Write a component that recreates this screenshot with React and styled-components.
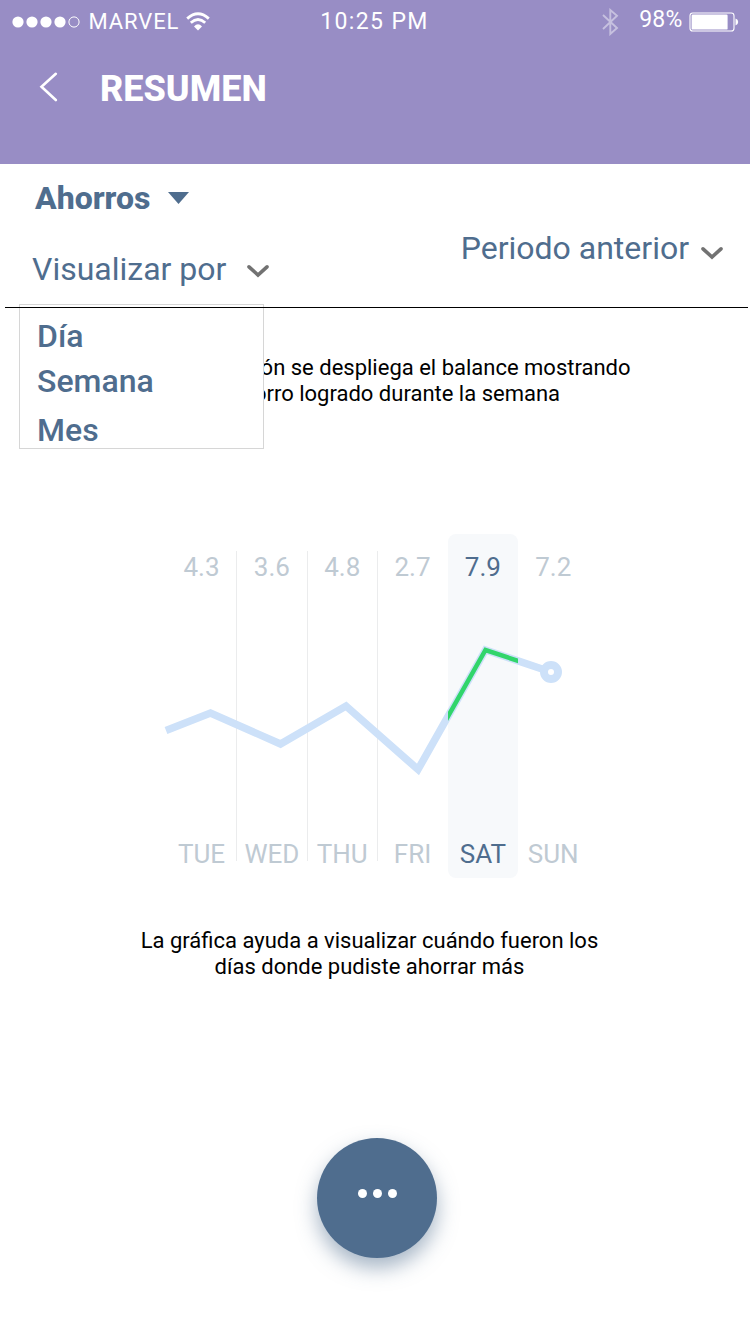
import React from 'react';
import styled, { createGlobalStyle } from 'styled-components';

const slate = '#4f6d8e';
const lilac = '#988dc5';

const GlobalStyle = createGlobalStyle`
  * { box-sizing: border-box; }
  body { margin: 0; background: #fff; font-family: Roboto, sans-serif; }
  p, h1, h2, ul { margin: 0; padding: 0; font-weight: 400; }
  svg { display: block; flex: none; }
  button { border: 0; padding: 0; background: none; font: inherit; color: inherit; }
`;

const Screen = styled.main`
  width: 750px;
  height: 1334px;
  display: flex;
  flex-direction: column;
  overflow: hidden;
  background: #fff;
`;

const Header = styled.header`
  height: 164px;
  flex: none;
  background: ${lilac};
  color: #fff;
`;

const StatusBar = styled.div`
  height: 43px;
  display: grid;
  grid-template-columns: 1fr auto 1fr;
  align-items: center;
  padding: 0 11.5px 0 11.5px;
  font-size: 22px;
  line-height: 26px;
`;

const Carrier = styled.div`
  display: flex;
  align-items: center;
  letter-spacing: 0.9px;
`;

const CarrierName = styled.span`
  margin: 1px 7px 0 8px;
`;

const Clock = styled.span`
  margin: 1px 1px 0 0;
  font-size: 23px;
  letter-spacing: 1.35px;
`;

const Power = styled.div`
  display: flex;
  align-items: center;
  justify-content: flex-end;
`;

const Percent = styled.span`
  margin: 0 6px 3px 20px;
  font-size: 23px;
  letter-spacing: 0.2px;
`;

const TitleRow = styled.div`
  display: flex;
  align-items: center;
  gap: 42px;
  padding: 25px 0 0 39px;
`;

const BackIcon = styled.svg`
  margin-bottom: 4px;
`;

const Title = styled.h1`
  font-size: 36px;
  line-height: 42px;
  font-weight: 800;
`;

const Filters = styled.section`
  position: relative;
  height: 143px;
  flex: none;
  display: flex;
  justify-content: space-between;
  padding: 15px 26px 0 32px;
  color: ${slate};
`;

const FilterColumn = styled.div`
  display: flex;
  flex-direction: column;
  align-items: flex-start;
  gap: 33px;
  padding-top: ${(p) => p.$top || 0}px;
`;

const Picker = styled.button`
  display: flex;
  align-items: center;
  gap: ${(p) => p.$gap}px;
  margin-left: ${(p) => p.$indent || 0}px;
  font-size: 32px;
  line-height: 38px;
  font-weight: ${(p) => (p.$strong ? 800 : 400)};
`;

const Chevron = styled.svg`
  margin-top: ${(p) => p.$drop}px;
`;

const Rule = styled.hr`
  position: relative;
  z-index: 2;
  width: 743px;
  height: 1px;
  flex: none;
  margin: 0 0 0 5px;
  border: 0;
  background: #000;
`;

const Menu = styled.ul`
  position: absolute;
  z-index: 1;
  left: 19px;
  top: 140px;
  width: 245px;
  height: 145px;
  padding: 12px 0 0 17px;
  border: 1px solid #d6d6d6;
  background: #fff;
  list-style: none;
`;

const MenuItem = styled.li`
  margin-bottom: ${(p) => p.$after}px;
  font-size: 32px;
  line-height: 38px;
  font-weight: 500;
`;

const Note = styled.p`
  margin: ${(p) => p.$margin};
  font-size: 22px;
  line-height: 26px;
  text-align: center;
  color: #000;
`;

const Chart = styled.section`
  position: relative;
  width: 422px;
  height: 344px;
  flex: none;
  margin: 127px 0 0 166.4px;
  display: grid;
  grid-template-columns: repeat(6, 1fr);
`;

const Day = styled.div`
  position: relative;
  display: flex;
  flex-direction: column;
  align-items: center;
  justify-content: space-between;
  padding: 18px 0 9px;
  border-radius: 8px;
  background: ${(p) => (p.$active ? '#f7f9fb' : 'transparent')};
  color: ${(p) => (p.$active ? slate : '#bfcad3')};
  font-size: 26px;
  line-height: 30px;

  &::after {
    content: '';
    display: ${(p) => (p.$divider ? 'block' : 'none')};
    position: absolute;
    right: -0.5px;
    top: 17px;
    width: 1px;
    height: 310px;
    background: #ebeced;
  }
`;

const Trend = styled.svg`
  position: absolute;
  left: -4.4px;
  top: 0;
`;

const Fab = styled.button`
  width: 120px;
  height: 120px;
  flex: none;
  display: flex;
  align-items: center;
  justify-content: center;
  gap: 6px;
  margin: 158px 0 0 317px;
  padding-bottom: 9px;
  border-radius: 50%;
  background: ${slate};
  box-shadow: 0 10px 20px rgba(79, 109, 142, 0.5);
`;

const Dot = styled.span`
  width: 9px;
  height: 9px;
  border-radius: 50%;
  background: #fff;
`;

const days = [
  { name: 'TUE', value: '4.3', divider: true },
  { name: 'WED', value: '3.6', divider: true },
  { name: 'THU', value: '4.8', divider: true },
  { name: 'FRI', value: '2.7' },
  { name: 'SAT', value: '7.9', active: true },
  { name: 'SUN', value: '7.2' },
];

const trendPoints = '4,196.5 48.5,179 118.5,210 184,172 256,235.5 323.5,116 389,138';

const Signal = () => (
  <svg width="69" height="12" viewBox="0 0 69 12">
    {[6, 20, 34, 48].map((x) => (
      <circle key={x} cx={x} cy="6" r="5.6" fill="#fff" />
    ))}
    <circle cx="62" cy="6" r="5.1" fill="none" stroke="#fff" />
  </svg>
);

const Wifi = () => (
  <svg width="24" height="20" viewBox="0 0 24 20" fill="none" stroke="#fff">
    <path d="M1.2 6.6 Q12 -3.2 22.8 6.6" strokeWidth="2.8" />
    <path d="M4.8 10.8 Q12 4.2 19.2 10.8" strokeWidth="2.8" />
    <path d="M8 14.4 Q12 10.2 16 14.4 L12 18.6 Z" fill="#fff" stroke="none" />
  </svg>
);

const Bluetooth = () => (
  <svg width="17" height="28" viewBox="0 0 17 28" fill="none" stroke="#fff" strokeWidth="1.9" opacity="0.45">
    <path d="M1 7 L15 20 L8.3 26 V2 L15 7.8 L1 21" />
  </svg>
);

const Battery = () => (
  <svg width="50" height="20" viewBox="0 0 50 20">
    <rect x="1" y="1" width="44" height="18" rx="2.8" fill="none" stroke="#fff" strokeWidth="1.1" />
    <rect x="2.6" y="2.6" width="36" height="15" rx="1.2" fill="#fff" />
    <path d="M46.5 6.5 Q49.2 7.2 49.2 10 Q49.2 12.8 46.5 13.5 Z" fill="#fff" />
  </svg>
);

const ChevronDown = ({ drop }) => (
  <Chevron $drop={drop} width="24" height="15" viewBox="0 0 24 15" fill="none" stroke="#727272" strokeWidth="3.6" strokeLinecap="round">
    <path d="M3 2.8 L12 11 L21 2.8" />
  </Chevron>
);

export default function App() {
  return (
    <>
      <GlobalStyle />
      <Screen>
        <Header>
          <StatusBar>
            <Carrier>
              <Signal />
              <CarrierName>MARVEL</CarrierName>
              <Wifi />
            </Carrier>
            <Clock>10:25 PM</Clock>
            <Power>
              <Bluetooth />
              <Percent>98%</Percent>
              <Battery />
            </Power>
          </StatusBar>
          <TitleRow>
            <BackIcon width="19" height="30" viewBox="0 0 19 30" fill="none" stroke="#fff" strokeWidth="2.6" strokeLinecap="round">
              <path d="M16.8 1.8 L2.5 14.8 L16.8 28" />
            </BackIcon>
            <Title>RESUMEN</Title>
          </TitleRow>
        </Header>

        <Filters>
          <FilterColumn>
            <Picker $strong $gap={18} $indent={3}>
              Ahorros
              <svg width="21" height="12" viewBox="0 0 21 12" fill={slate}>
                <path d="M0 0 H21 L10.5 12 Z" />
              </svg>
            </Picker>
            <Picker $gap={20}>
              Visualizar por
              <ChevronDown drop={5} />
            </Picker>
          </FilterColumn>
          <FilterColumn $top={50}>
            <Picker $gap={11}>
              Periodo anterior
              <ChevronDown drop={10} />
            </Picker>
          </FilterColumn>
          <Menu>
            <MenuItem $after={7}>Día</MenuItem>
            <MenuItem $after={11}>Semana</MenuItem>
            <MenuItem>Mes</MenuItem>
          </Menu>
        </Filters>
        <Rule />

        <Note $margin="47px 0 0 12px">
          En esta sección se despliega el balance mostrando
          <br />
          &nbsp;el ahorro logrado durante la semana
        </Note>

        <Chart>
          {days.map((d) => (
            <Day key={d.name} $active={d.active} $divider={d.divider}>
              <span>{d.value}</span>
              <span>{d.name}</span>
            </Day>
          ))}
          <Trend width="430" height="344" viewBox="0 0 430 344" fill="none">
            <defs>
              <clipPath id="active-day">
                <rect x="286" y="0" width="70" height="344" />
              </clipPath>
            </defs>
            <polyline points={trendPoints} stroke="#cde1f9" strokeWidth="7.5" />
            <polyline points={trendPoints} stroke="#31d56b" strokeWidth="4.5" clipPath="url(#active-day)" />
            <circle cx="389" cy="138" r="7" fill="#fff" stroke="#cde1f9" strokeWidth="8" />
          </Trend>
        </Chart>

        <Note $margin="50px 11px 0 0">
          La gráfica ayuda a visualizar cuándo fueron los
          <br />
          días donde pudiste ahorrar más
        </Note>

        <Fab aria-label="Más opciones">
          <Dot />
          <Dot />
          <Dot />
        </Fab>
      </Screen>
    </>
  );
}
